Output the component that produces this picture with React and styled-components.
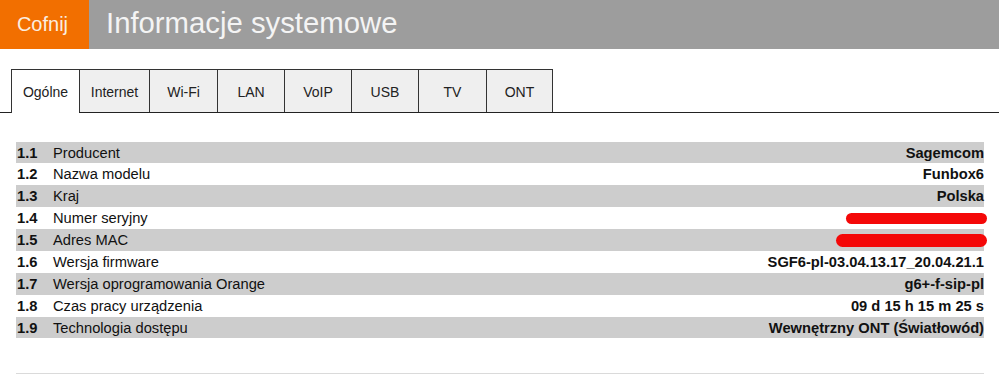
import React from 'react';
import styled, { createGlobalStyle } from 'styled-components';

const Global = createGlobalStyle`
  body {
    margin: 0;
    background: #fff;
    font-family: Arial, "Liberation Sans", sans-serif;
    color: #111;
  }
`;

const Header = styled.header`
  display: flex;
  height: 49px;
  background: #9d9d9d;
  align-items: center;
`;

const Back = styled.div`
  width: 89px;
  height: 100%;
  background: #f26f00;
  color: #fbeee0;
  font-size: 20px;
  display: flex;
  align-items: center;
  justify-content: center;
  padding-right: 4px;
  box-sizing: border-box;
`;

const Title = styled.h1`
  margin: 0 0 0 17px;
  font-weight: normal;
  font-size: 29.3px;
  color: #f4f4f4;
  padding-bottom: 3px;
`;

const Tabs = styled.nav`
  display: flex;
  margin-top: 20px;
  padding-left: 11px;
  border-bottom: 1px solid #222;
  height: 43px;
`;

const Tab = styled.div`
  width: ${p => p.$w}px;
  display: flex;
  align-items: center;
  justify-content: center;
  font-size: 14px;
  color: #222;
  border-top: 1px solid #333;
  border-left: 1px solid #333;
  border-right: ${p => (p.$last ? '1px solid #333' : 'none')};
  background: ${p => (p.$active ? '#fff' : '#efefef')};
  margin-bottom: ${p => (p.$active ? '-1px' : '0')};
  padding-top: 1px;
  box-sizing: border-box;
`;

const Content = styled.main`
  padding: 29px 15px 0 16px;
`;

const Table = styled.div`
  display: flex;
  flex-direction: column;
`;

const Row = styled.div`
  display: flex;
  align-items: center;
  height: ${p => p.$h}px;
  background: ${p => (p.$odd ? '#cdcdcd' : '#fff')};
  font-size: 14.7px;
`;

const Num = styled.span`
  width: 37px;
  padding-left: 1px;
  font-weight: bold;
  box-sizing: border-box;
`;

const Label = styled.span`
  flex: 1;
`;

const Value = styled.span`
  font-weight: bold;
  display: flex;
  align-items: center;
`;

const Redact = styled.span`
  display: block;
  width: ${p => p.$w}px;
  height: ${p => p.$h}px;
  border-radius: 7px;
  background: #f40808;
  margin-right: -3px;
`;

const Divider = styled.hr`
  margin: 35px 0 0;
  border: none;
  border-top: 1px solid #dadada;
`;

const tabs = [
  ['Ogólne', 68],
  ['Internet', 70],
  ['Wi-Fi', 68],
  ['LAN', 67],
  ['VoIP', 67],
  ['USB', 67],
  ['TV', 68],
  ['ONT', 67],
];

const rows = [
  ['1.1', 'Producent', 'Sagemcom'],
  ['1.2', 'Nazwa modelu', 'Funbox6'],
  ['1.3', 'Kraj', 'Polska'],
  ['1.4', 'Numer seryjny', null, [141, 11]],
  ['1.5', 'Adres MAC', null, [151, 13]],
  ['1.6', 'Wersja firmware', 'SGF6-pl-03.04.13.17_20.04.21.1'],
  ['1.7', 'Wersja oprogramowania Orange', 'g6+-f-sip-pl'],
  ['1.8', 'Czas pracy urządzenia', '09 d 15 h 15 m 25 s'],
  ['1.9', 'Technologia dostępu', 'Wewnętrzny ONT (Światłowód)'],
];

const heights = [21, 22, 22, 22, 22, 22, 22, 22, 21];

export default function App() {
  return (
    <>
      <Global />
      <Header>
        <Back>Cofnij</Back>
        <Title>Informacje systemowe</Title>
      </Header>
      <Tabs>
        {tabs.map(([t, w], i) => (
          <Tab key={t} $w={w} $active={i === 0} $last={i === tabs.length - 1}>
            {t}
          </Tab>
        ))}
      </Tabs>
      <Content>
        <Table>
          {rows.map(([n, l, v, r], i) => (
            <Row key={n} $odd={i % 2 === 0} $h={heights[i]}>
              <Num>{n}</Num>
              <Label>{l}</Label>
              <Value>{r ? <Redact $w={r[0]} $h={r[1]} /> : v}</Value>
            </Row>
          ))}
        </Table>
        <Divider />
      </Content>
    </>
  );
}
